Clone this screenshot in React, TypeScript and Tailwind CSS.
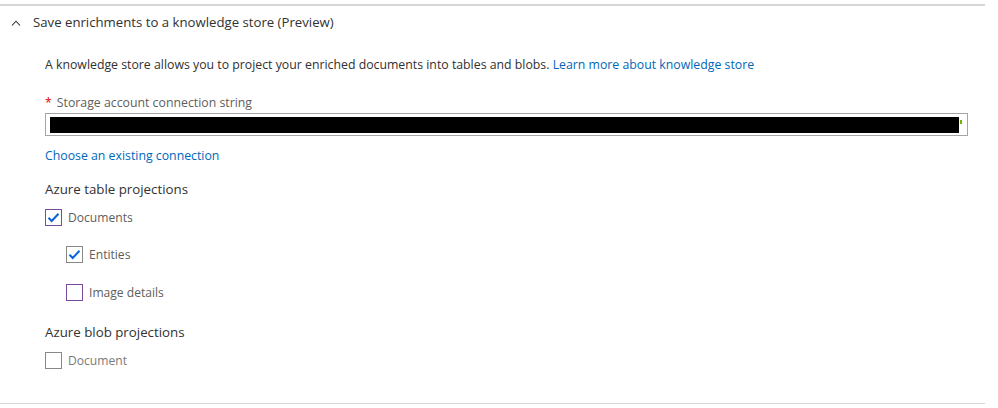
import { useState } from "react";

type CheckProps = {
  label: string;
  checked: boolean;
  focused?: boolean;
  muted?: boolean;
  className?: string;
  onToggle: () => void;
};

function CheckRow({ label, checked, focused, muted, className, onToggle }: CheckProps) {
  return (
    <button
      className={`flex h-5 items-center gap-[6px] text-left text-[12.1px] ${className ?? ""}`}
      onClick={onToggle}
      type="button"
    >
      <span
        className={
          focused
            ? "flex h-[17px] w-[17px] items-center justify-center border border-[#7a4b9c] bg-white"
            : "flex h-[17px] w-[17px] items-center justify-center border border-[#8a8886] bg-white"
        }
      >
        {checked ? (
          <svg width="13" height="11" viewBox="0 0 13 11" fill="none">
            <path d="M1.5 5.8 L4.7 9 L11.5 1.8" stroke="#0a63d8" strokeWidth="2" />
          </svg>
        ) : null}
      </span>
      <span className={muted ? "pt-[2px] text-[#7a7a7a]" : "pt-[2px] text-[#605e5c]"}>{label}</span>
    </button>
  );
}

export default function App() {
  const [open, setOpen] = useState(true);
  const [documents, setDocuments] = useState(true);
  const [entities, setEntities] = useState(true);
  const [imageDetails, setImageDetails] = useState(false);
  const [blobDocument, setBlobDocument] = useState(false);

  return (
    <div className="h-[408px] w-[998px] bg-white pt-[4px] text-[12.3px] text-[#323130] [font-family:'Open_Sans','Noto_Sans',sans-serif]">
      <div className="w-[985px] border-t-2 border-b border-t-[#d6d6d6] border-b-[#d6d6d6]">
        <button
          className="flex h-8 items-center pl-[11px] pt-[2px] text-[13.2px] text-[#323130]"
          onClick={() => setOpen(!open)}
          type="button"
        >
          <svg width="10" height="6" viewBox="0 0 10 6" fill="none" className="mr-[12px]">
            <path d={open ? "M1 5.5 L5 1.2 L9 5.5" : "M1 0.5 L5 4.8 L9 0.5"} stroke="#323130" strokeWidth="1.1" />
          </svg>
          <span>Save enrichments to a knowledge store (Preview)</span>
        </button>

        {open ? (
          <div className="pb-[33px] pl-[45px] pr-[16px]">
            <p className="mt-[17px] h-5 leading-5">
              A knowledge store allows you to project your enriched documents into tables and blobs.{" "}
              <a className="text-[#0067b8]" href="#">
                Learn more about knowledge store
              </a>
            </p>

            <label className="mt-[18px] flex h-5 items-center leading-5 text-[#605e5c]">
              <span className="mr-[5px] text-[#e50000]">*</span>
              Storage account connection string
            </label>
            <div className="flex h-[23px] w-[923px] items-center border border-[#a6a6a6] pl-[4px] pr-[5px]">
              <div className="h-[16px] flex-1 bg-black" />
              <div className="mb-[6px] ml-[1px] h-[4px] w-[2px] bg-[#6bb700]" />
            </div>

            <a className="mt-[10px] block h-5 leading-5 text-[#0067b8]" href="#">
              Choose an existing connection
            </a>

            <h3 className="mt-[13px] h-5 text-[13.3px] leading-5">Azure table projections</h3>
            <CheckRow
              className="mt-[8px]"
              label="Documents"
              checked={documents}
              focused
              onToggle={() => setDocuments(!documents)}
            />
            <CheckRow
              className="ml-[21px] mt-[17px]"
              label="Entities"
              checked={entities}
              onToggle={() => setEntities(!entities)}
            />
            <CheckRow
              className="ml-[21px] mt-[18px]"
              label="Image details"
              checked={imageDetails}
              focused
              onToggle={() => setImageDetails(!imageDetails)}
            />

            <h3 className="mt-[20px] h-5 text-[13.3px] leading-5">Azure blob projections</h3>
            <CheckRow
              className="mt-[8px]"
              label="Document"
              checked={blobDocument}
              muted
              onToggle={() => setBlobDocument(!blobDocument)}
            />
          </div>
        ) : null}
      </div>
    </div>
  );
}
